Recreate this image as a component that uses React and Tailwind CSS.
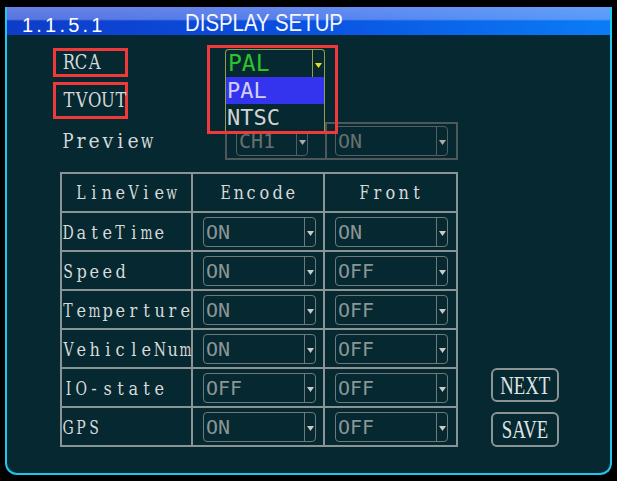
import React from "react";

const serif = "font-['Liberation_Serif',serif]";
const osd = "font-['DejaVu_Serif',serif]";
const sansMono = "font-['DejaVu_Sans_Mono',monospace]";

const tones = {
  normal: {
    box: "border-[#6e7a7a]",
    text: "text-[#8a9696]",
    arrow: "#c8cccc",
  },
  dim: {
    box: "border-[#545e5e]",
    text: "text-[#66716f]",
    arrow: "#a8acac",
  },
};

const rows = [
  ["DateTime", "ON", "ON"],
  ["Speed", "ON", "OFF"],
  ["Temperture", "ON", "OFF"],
  ["VehicleNum", "ON", "OFF"],
  ["IO-state", "OFF", "OFF"],
  ["GPS", "ON", "OFF"],
];

// wide glyphs get pinched harder so they stay inside their cell
function squeeze(ch) {
  if ("mwMW".includes(ch)) return "scale-x-[0.7]";
  if (ch >= "A" && ch <= "Z") return "scale-x-[0.78]";
  return "scale-x-[0.9]";
}

// OSD font is a fixed-pitch serif: every glyph gets its own 13px cell
function Mono({ text }) {
  return (
    <span className="inline-flex">
      {[...text].map((ch, i) => (
        <span key={i} className="flex w-[13px] justify-center">
          <span className={`inline-block ${squeeze(ch)}`}>{ch}</span>
        </span>
      ))}
    </span>
  );
}

function Arrow({ color }) {
  return (
    <svg width="7" height="5" viewBox="0 0 7 5" className="mt-[3px]">
      <path d="M0 0h7L3.5 5z" fill={color} />
    </svg>
  );
}

function Combo({ value, size = "h-[30px] w-[113px]", tone = "normal" }) {
  const t = tones[tone];
  return (
    <div className={`flex ${size} rounded-[4px] border-[1.5px] ${t.box}`}>
      <span
        className={`flex flex-1 items-center pl-[2px] ${sansMono} text-[20px] leading-none ${t.text}`}
      >
        {value}
      </span>
      <span
        className={`flex w-[11px] items-center justify-center border-l-[1.5px] ${t.box}`}
      >
        <Arrow color={t.arrow} />
      </span>
    </div>
  );
}

function Label({ children }) {
  return (
    <span className={`${osd} text-[21px] leading-none text-[#d4d8d8]`}>
      <Mono text={children} />
    </span>
  );
}

function OsdButton({ children, height }) {
  return (
    <div
      className={`flex ${height} w-[68px] items-center justify-center rounded-[6px] border-2 border-[#8a9494]`}
    >
      <span className={`inline-block scale-x-75 ${serif} text-[25px] leading-none text-[#dfe3e3]`}>
        {children}
      </span>
    </div>
  );
}

export default function App() {
  return (
    <div className="h-[481px] w-[617px] bg-black px-[5px] pb-[6px] pt-[7px]">
      <div className="flex h-full flex-col overflow-hidden rounded-b-[12px] border-x-2 border-b-2 border-[#1ec6ea] bg-[#062830]">
        {/* title bar */}
        <div className="flex h-[28px] shrink-0 items-center bg-[linear-gradient(to_bottom,rgba(190,195,255,0.5)_0%,rgba(190,195,255,0.42)_44%,rgba(0,0,0,0)_50%),linear-gradient(to_right,#0e3cc8_0%,#0a4ede_45%,#0a7cf6_100%)]">
          <span className="ml-[15px] mt-[8px] w-[163px] font-['Liberation_Sans',sans-serif] text-[20px] leading-none tracking-[3.2px] text-white">
            1.1.5.1
          </span>
          <span className="mt-[3px] inline-block origin-left scale-x-[0.85] font-['Liberation_Sans',sans-serif] text-[24px] leading-none text-[#f4f6ff]">
            DISPLAY SETUP
          </span>
        </div>

        <div className="pl-[46px]">
          {/* RCA */}
          <div className="mt-[13px] flex items-start">
            <div className="flex h-[29px] w-[75px] items-center border-[3px] border-[#f03a3a] pl-[6px]">
              <Label>RCA</Label>
            </div>
            <div className="relative ml-[97px] mt-[1px] h-[28px] w-[100px]">
              <div className="flex h-full rounded-t-[4px] border-[1.5px] border-b-0 border-[#9a9a4a]">
                <span
                  className={`flex flex-1 items-center pl-[2px] ${sansMono} text-[23px] leading-none text-[#2cc42c]`}
                >
                  PAL
                </span>
                <span className="flex w-[12px] items-center justify-center border-l-[1.5px] border-[#9a9a4a]">
                  <Arrow color="#e6dc2a" />
                </span>
              </div>
              <div
                className={`absolute left-0 top-full w-[100px] border-[1.5px] border-t-0 border-[#9a9a4a] bg-[#062830] ${sansMono} text-[22px] leading-none`}
              >
                <div className="flex h-[27px] items-center bg-[#3434ee] pl-[1px] text-[#cfd0f4]">
                  PAL
                </div>
                <div className="flex h-[28px] items-center pl-[1px] text-[#d2d4d4]">
                  NTSC
                </div>
              </div>
              <div className="absolute -left-[18px] -top-[4px] h-[89px] w-[131px] border-[3px] border-[#f03a3a]" />
            </div>
          </div>

          {/* TVOUT */}
          <div className="mt-[5px] flex h-[37px] w-[75px] items-center border-[3px] border-[#f03a3a] pl-[6px]">
            <Label>TVOUT</Label>
          </div>

          {/* Preview */}
          <div className="mt-[3px] flex h-[38px]">
            <div className="flex w-[172px] items-center pl-[9px]">
              <Label>Preview</Label>
            </div>
            <div className="flex w-[100px] items-center border-2 border-r-0 border-[#4e5858] pl-[9px]">
              <Combo value="CH1" size="h-[29px] w-[72px]" tone="dim" />
            </div>
            <div className="flex w-[133px] items-center border-2 border-[#4e5858] pl-[8px]">
              <Combo value="ON" tone="dim" />
            </div>
          </div>

          {/* line view table + buttons */}
          <div className="ml-[7px] mt-[12px] flex">
            <div
              className={`grid w-[398px] grid-cols-[131px_132px_133px] border-l-2 border-t-2 border-[#8a9494] ${osd} text-[18px] leading-none text-[#d6dada]`}
            >
              {["LineView", "Encode", "Front"].map((h) => (
                <div
                  key={h}
                  className="flex h-[39px] items-center justify-center border-b-2 border-r-2 border-[#8a9494]"
                >
                  <Mono text={h} />
                </div>
              ))}
              {rows.map(([name, enc, front]) => (
                <React.Fragment key={name}>
                  <div className="flex h-[39px] items-center whitespace-nowrap border-b-2 border-r-2 border-[#8a9494] pt-[3px]">
                    <Mono text={name} />
                  </div>
                  <div className="flex h-[39px] items-center border-b-2 border-r-2 border-[#8a9494] pl-[10px]">
                    <Combo value={enc} />
                  </div>
                  <div className="flex h-[39px] items-center border-b-2 border-r-2 border-[#8a9494] pl-[10px]">
                    <Combo value={front} />
                  </div>
                </React.Fragment>
              ))}
            </div>
            <div className="ml-[33px] flex flex-col gap-[10px] self-end">
              <OsdButton height="h-[34px]">NEXT</OsdButton>
              <OsdButton height="h-[35px]">SAVE</OsdButton>
            </div>
          </div>
        </div>
      </div>
    </div>
  );
}
